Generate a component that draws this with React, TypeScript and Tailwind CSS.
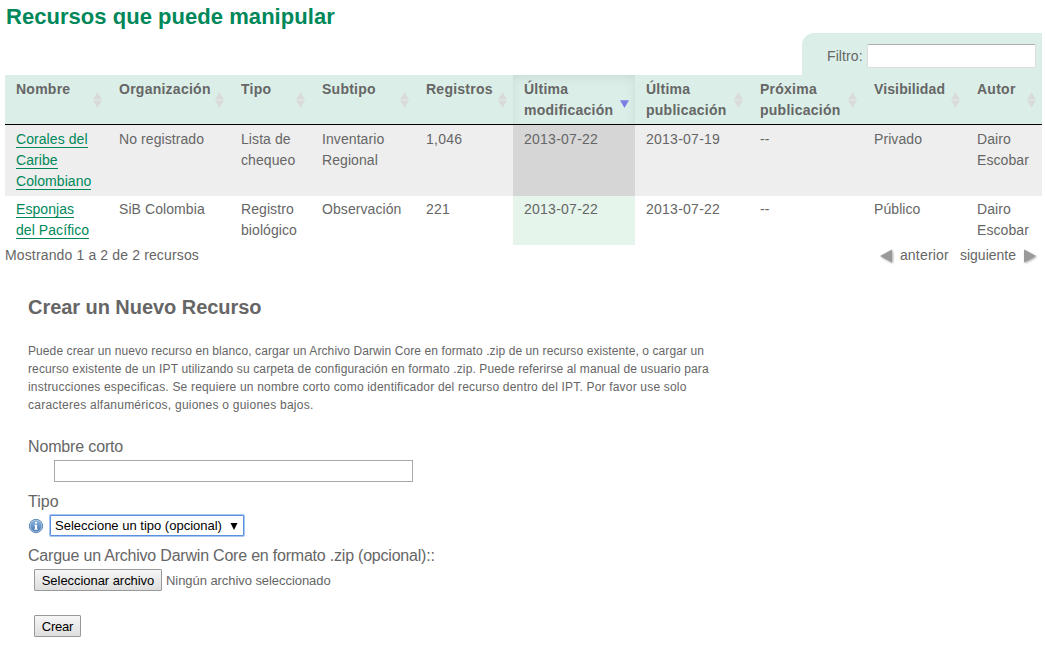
import type { ReactNode } from 'react';

type SortState = 'none' | 'desc';
type Column = { title: ReactNode; width: string; sort: SortState };

const columns: Column[] = [
  { title: 'Nombre', width: 'w-[103px]', sort: 'none' },
  { title: 'Organización', width: 'w-[122px]', sort: 'none' },
  { title: 'Tipo', width: 'w-[81px]', sort: 'none' },
  { title: 'Subtipo', width: 'w-[104px]', sort: 'none' },
  { title: 'Registros', width: 'w-[98px]', sort: 'none' },
  { title: <>Última<br />modificación</>, width: 'w-[122px]', sort: 'desc' },
  { title: <>Última<br />publicación</>, width: 'w-[114px]', sort: 'none' },
  { title: <>Próxima<br />publicación</>, width: 'w-[114px]', sort: 'none' },
  { title: 'Visibilidad', width: 'w-[103px]', sort: 'none' },
  { title: 'Autor', width: 'w-[76px]', sort: 'none' },
];

const author = <>Dairo<br />Escobar</>;

const rows: { name: ReactNode; cells: ReactNode[] }[] = [
  {
    name: <>Corales del<br />Caribe<br />Colombiano</>,
    cells: ['No registrado', <>Lista de<br />chequeo</>, <>Inventario<br />Regional</>, '1,046', '2013-07-22', '2013-07-19', '--', 'Privado', author],
  },
  {
    name: <>Esponjas<br />del Pacífico</>,
    cells: ['SiB Colombia', <>Registro<br />biológico</>, 'Observación', '221', '2013-07-22', '2013-07-22', '--', 'Público', author],
  },
];

function SortIcon({ sort }: { sort: SortState }) {
  return (
    <svg className="mt-[17px] mr-[6px] h-4 w-[9px] shrink-0" viewBox="0 0 9 16">
      {sort === 'none' ? (
        <path d="M4.5 0 9 7.4H0ZM0 8.6h9L4.5 16Z" fill="#dadada" />
      ) : (
        <path d="M0 8.2h9L4.5 16Z" fill="#7b7fe3" />
      )}
    </svg>
  );
}

function PagerArrow({ direction }: { direction: 'left' | 'right' }) {
  return (
    <svg className="h-[18px] w-[16px] drop-shadow-[1px_1px_1px_rgba(0,0,0,0.35)]" viewBox="0 0 16 18">
      <path d={direction === 'left' ? 'M14 2.5v13L2 9Z' : 'M2 2.5v13L14 9Z'} fill="#999" />
    </svg>
  );
}

function InfoIcon() {
  return (
    <svg className="h-4 w-4" viewBox="0 0 16 16">
      <defs>
        <linearGradient id="info" x1="0" y1="0" x2="0" y2="1">
          <stop offset="0" stopColor="#8bb3dc" />
          <stop offset="1" stopColor="#4779b5" />
        </linearGradient>
      </defs>
      <circle cx="8" cy="8" r="6.7" fill="#b9cfe6" stroke="#5380b3" strokeWidth="0.9" />
      <circle cx="8" cy="8" r="5.6" fill="url(#info)" />
      <path d="M7 4h2v1.5H7ZM6.4 6.7H9v4h.7v1.1H6.3v-1.1H7V7.8h-.6Z" fill="#fff" />
    </svg>
  );
}

export default function App() {
  return (
    <div className="flex h-[659px] w-[1045px] flex-col overflow-hidden bg-white pr-[3px] pl-[5px] font-['Liberation_Sans',Arial,sans-serif] text-[14px] leading-[21px] text-[#666]">
      <div className="flex h-[75px] justify-between">
        <h2 className="pt-1 pl-px text-[22px] leading-[26px] font-bold tracking-[0.04px] whitespace-nowrap text-[#00885a]">
          Recursos que puede manipular
        </h2>
        <label className="mt-[33px] flex h-[42px] w-[240px] items-start rounded-tl-[12px] bg-[#dbefe8] pt-[11px] pl-[25px]">
          <span className="w-[40px] pt-[2px] tracking-[0.1px]">Filtro:</span>
          <input className="h-[24px] w-[169px] rounded-[2px] border border-[#dcdce4] border-t-[#abadb3] bg-white px-1 outline-none" />
        </label>
      </div>

      <table className="w-[1037px] table-fixed border-collapse">
        <thead>
          <tr className="h-[50px] bg-[#dbefe8]">
            {columns.map((c, i) => (
              <th
                key={i}
                className={`${c.width} p-0 text-left align-top font-bold ${c.sort === 'desc' ? 'shadow-[inset_0_3px_10px_rgba(80,80,80,0.12)]' : ''}`}
              >
                <div className="flex h-[50px] justify-between border-b border-black pt-1 pl-[11px]">
                  <span className={`w-0 whitespace-nowrap ${i === 8 ? 'tracking-[0.12px]' : 'tracking-[0.25px]'}`}>{c.title}</span>
                  <div className="-mt-1">
                    <SortIcon sort={c.sort} />
                  </div>
                </div>
              </th>
            ))}
          </tr>
        </thead>
        <tbody>
          {rows.map((r, i) => (
            <tr key={i} className={i === 0 ? 'h-[71px] bg-[#eee]' : 'h-[49px]'}>
              <td className={`${i === 0 ? 'pt-1' : 'pt-[3px]'} pl-[11px] align-top tracking-[0.07px] whitespace-nowrap`}>
                <a className="border-b border-[#00885a] text-[#00885a]">{r.name}</a>
              </td>
              {r.cells.map((cell, j) => (
                <td
                  key={j}
                  className={`${i === 0 ? 'pt-1' : 'pt-[3px]'} pl-[11px] align-top whitespace-nowrap ${j >= 3 && j <= 5 ? 'tracking-[0.25px]' : 'tracking-[0.08px]'} ${j === 4 ? (i === 0 ? 'bg-[#d6d6d6]' : 'bg-[#e5f5eb]') : ''}`}
                >
                  {cell}
                </td>
              ))}
            </tr>
          ))}
        </tbody>
      </table>

      <div className="flex h-[21px] items-center justify-between">
        <span className="tracking-[0.14px]">Mostrando 1 a 2 de 2 recursos</span>
        <div className="flex items-center pr-[4px]">
          <PagerArrow direction="left" />
          <span className="ml-[6px] tracking-[0.2px]">anterior</span>
          <span className="mr-[6px] ml-[11px]">siguiente</span>
          <PagerArrow direction="right" />
        </div>
      </div>

      <section className="flex flex-col items-start pl-[23px]">
        <h3 className="mt-[29px] text-[20px] leading-6 font-bold tracking-[-0.05px]">Crear un Nuevo Recurso</h3>
        <p className="mt-[23px] text-[12px] leading-[18px] whitespace-nowrap">
          <span className="tracking-[0.09px]">
            Puede crear un nuevo recurso en blanco, cargar un Archivo Darwin Core en formato .zip de un recurso existente, o cargar un
          </span>
          <br />
          <span className="tracking-[0.127px]">
            recurso existente de un IPT utilizando su carpeta de configuración en formato .zip. Puede referirse al manual de usuario para
          </span>
          <br />
          <span className="tracking-[0.185px]">
            instrucciones especificas. Se requiere un nombre corto como identificador del recurso dentro del IPT. Por favor use solo
          </span>
          <br />
          <span className="tracking-[0.24px]">caracteres alfanuméricos, guiones o guiones bajos.</span>
        </p>
        <label className="mt-[23px] text-[16px] leading-5 tracking-[-0.15px]">Nombre corto</label>
        <input className="mt-[3px] ml-[26px] h-[22px] w-[359px] border border-[#a9a9a9] px-1 outline-none" />
        <label className="mt-[10px] text-[16px] leading-5">Tipo</label>
        <div className="mt-[3px] flex items-center">
          <InfoIcon />
          <button className="ml-[6px] flex h-[21px] w-[194px] items-center rounded-[1px] border border-[#5b8fe0] bg-white pt-px pl-1 text-[13px] leading-4 text-black shadow-[0_0_0_1px_#a9c5f1]">
            <span className="w-[175px] text-left whitespace-nowrap">Seleccione un tipo (opcional)</span>
            <svg className="h-[7px] w-[8px]" viewBox="0 0 8 7">
              <path d="M.5 0h7L4 7Z" fill="#000" />
            </svg>
          </button>
        </div>
        <label className="mt-[10px] text-[16px] leading-5 tracking-[-0.21px] whitespace-nowrap">
          Cargue un Archivo Darwin Core en formato .zip (opcional)::
        </label>
        <div className="mt-[3px] ml-[6px] flex items-center text-[13px] leading-5">
          <button className="h-[22px] w-[128px] rounded-[1px] border border-[#999] bg-linear-to-b from-[#f6f6f6] to-[#dedede] pt-px text-center tracking-[-0.05px] whitespace-nowrap text-black">
            Seleccionar archivo
          </button>
          <span className="ml-1 pt-px tracking-[-0.06px]">Ningún archivo seleccionado</span>
        </div>
        <button className="mt-[24px] ml-[6px] h-[22px] w-[47px] rounded-[1px] border border-[#999] bg-linear-to-b from-[#f6f6f6] to-[#dedede] pt-px text-[13px] leading-5 tracking-[-0.25px] text-black">
          Crear
        </button>
      </section>
    </div>
  );
}
